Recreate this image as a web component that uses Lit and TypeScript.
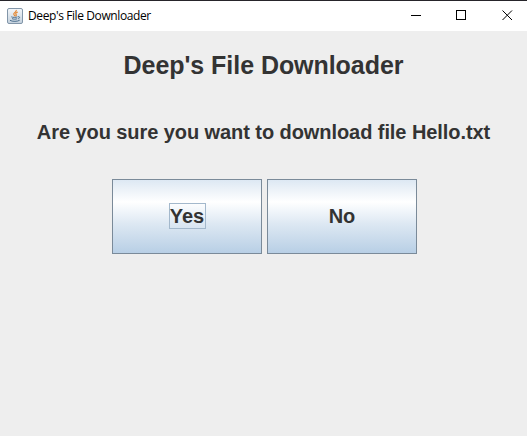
import { LitElement, html, css } from "lit";
import { customElement, property } from "lit/decorators.js";

@customElement("title-bar")
class TitleBar extends LitElement {
  static styles = css`
    :host {
      display: flex;
      align-items: center;
      box-sizing: border-box;
      height: 31px;
      padding: 0 14px 0 7px;
      background: #fff;
      border-top: 1px solid #26242a;
      color: #000;
    }
    .logo {
      flex: none;
      width: 16px;
      height: 16px;
      margin-right: 5px;
    }
    .caption {
      flex: 1;
      white-space: nowrap;
      font: 12px/16px "Open Sans", "Noto Sans", sans-serif;
      letter-spacing: -0.4px;
    }
    .controls {
      display: flex;
      padding-bottom: 1px;
    }
    .controls svg {
      display: block;
      width: 11px;
      height: 11px;
      fill: none;
      stroke: #000;
    }
    .maximize {
      margin: 0 35px 0 34px;
    }
  `;

  render() {
    return html`
      <svg class="logo" viewBox="0 0 16 16">
        <defs>
          <linearGradient id="tile" x1="0" y1="0" x2="0" y2="1">
            <stop offset="0" stop-color="#f4f7fa" />
            <stop offset="1" stop-color="#c3d0dc" />
          </linearGradient>
        </defs>
        <rect x=".5" y=".5" width="15" height="15" rx="1.5" fill="url(#tile)" stroke="#8296a9" />
        <path d="M9.2 2C10 4 6.2 4.6 6.8 6.3L8 8.2M10.8 4C8.6 4.8 8.2 5.6 9.2 6.6 9.5 7.2 9.2 7.8 8.6 8.2" fill="none" stroke="#e5862f" stroke-width="1.2" />
        <path d="M4.3 8.8C5.5 9.6 9 9.5 10.5 8.9M5 10.6C6.5 11.4 9 11.3 10.2 10.7M3 12.3C5 13.8 11 13.6 12.7 12.2M11 8.8C13.2 8.2 13 10.2 11.2 10.9" fill="none" stroke="#4d708f" stroke-width="1" />
      </svg>
      <span class="caption">Deep's File Downloader</span>
      <span class="controls">
        <svg viewBox="0 0 11 11"><path d="M0 5.5H10" /></svg>
        <svg class="maximize" viewBox="0 0 11 11"><rect x=".5" y=".5" width="9" height="9" /></svg>
        <svg viewBox="0 0 11 11"><path d="M.5 .5L10 10M10 .5L.5 10" /></svg>
      </span>
    `;
  }
}

@customElement("metal-button")
class MetalButton extends LitElement {
  @property() label = "";
  @property({ type: Boolean }) focused = false;

  static styles = css`
    button {
      display: flex;
      align-items: center;
      justify-content: center;
      box-sizing: border-box;
      width: 150px;
      height: 75px;
      padding: 0 0 1px;
      border: 1px solid #7a8a99;
      border-radius: 0;
      background: linear-gradient(#dde8f3, #fff 30%, #dde8f3 60%, #b8cfe5);
      color: #333;
      font: bold 20px/24px "Liberation Sans", Arial, sans-serif;
    }
    .text {
      border: 1px solid transparent;
    }
    .focused {
      margin-right: -1px;
      padding-right: 1px;
      border-color: #a3b8cc;
    }
  `;

  render() {
    return html`<button><span class="text ${this.focused ? "focused" : ""}">${this.label}</span></button>`;
  }
}

@customElement("app-root")
class AppRoot extends LitElement {
  static styles = css`
    :host {
      display: block;
      height: 436px;
      overflow: hidden;
      background: #eee;
      color: #333;
      font-family: "Liberation Sans", Arial, sans-serif;
    }
    main {
      display: flex;
      flex-direction: column;
      align-items: center;
    }
    h1 {
      margin: 20px 0 0;
      font-size: 25px;
      line-height: 29px;
      letter-spacing: -0.05px;
      white-space: nowrap;
    }
    p {
      margin: 40px 0 0;
      font-size: 20px;
      font-weight: bold;
      line-height: 24px;
      letter-spacing: -0.07px;
      white-space: nowrap;
    }
    .actions {
      display: flex;
      gap: 5px;
      margin: 35px 0 0 2px;
    }
  `;

  render() {
    return html`
      <title-bar></title-bar>
      <main>
        <h1>Deep's File Downloader</h1>
        <p>Are you sure you want to download file Hello.txt</p>
        <div class="actions">
          <metal-button label="Yes" focused></metal-button>
          <metal-button label="No"></metal-button>
        </div>
      </main>
    `;
  }
}
